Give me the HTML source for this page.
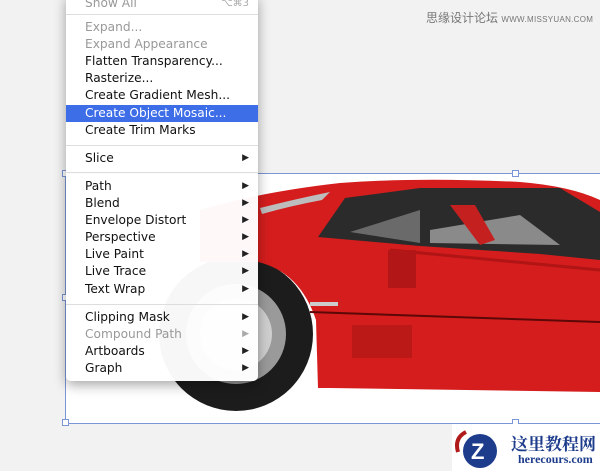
<!DOCTYPE html>
<html><head><meta charset="utf-8"><style>
body{margin:0;width:600px;height:471px;background:#f2f2f2;position:relative;overflow:hidden;font-family:"DejaVu Sans","Liberation Sans",sans-serif}
.menu{position:absolute;left:66px;top:-5px;width:192px;height:386px;background:rgba(255,255,255,0.97);border-radius:0 0 5px 5px;box-shadow:0 4px 12px rgba(0,0,0,.35)}
.it{position:absolute;left:19px;font-size:12.2px;color:#111;line-height:17px;height:17px;width:173px}
.it.d{color:#999}
.it .a{position:absolute;right:9px;top:0;font-size:9px;color:#222}
.it.d .a{color:#aaa}
.sel{background:#3d6ee8;color:#fff;left:0;padding-left:19px;width:173px}
.sep{position:absolute;left:0;width:192px;height:1px;background:#ddd}
</style></head><body>
<div style="position:absolute;left:426px;top:9px;font-size:12px;color:#777;font-family:'Liberation Sans','Noto Sans CJK SC',sans-serif">思缘设计论坛 <span style="font-size:8px;letter-spacing:.3px">WWW.MISSYUAN.COM</span></div>
<div style="position:absolute;left:65px;top:173px;width:540px;height:249px;background:#fff;border:1px solid #7b96d6"></div>
<div style="position:absolute;left:62px;top:170px;width:5px;height:5px;border:1px solid #7b96d6;background:#fff"></div>
<div style="position:absolute;left:62px;top:294px;width:5px;height:5px;border:1px solid #7b96d6;background:#fff"></div>
<div style="position:absolute;left:62px;top:419px;width:5px;height:5px;border:1px solid #7b96d6;background:#fff"></div>
<div style="position:absolute;left:512px;top:170px;width:5px;height:5px;border:1px solid #7b96d6;background:#fff"></div>
<div style="position:absolute;left:512px;top:419px;width:5px;height:5px;border:1px solid #7b96d6;background:#fff"></div>
<svg style="position:absolute;left:0;top:0" width="600" height="471">
<circle cx="236" cy="334" r="77" fill="#1c1c1c"/>
<circle cx="236" cy="334" r="50" fill="#9a9a9a"/>
<circle cx="236" cy="334" r="36" fill="#cfcfcf"/>
<path d="M200 210 Q260 192 340 183 Q420 177 520 182 Q570 186 600 200 L600 392 L330 388 L318 388 L316 320 Q300 272 258 262 L200 262 Z" fill="#d51d1d"/>
<path d="M260 208 Q300 198 330 192 L322 200 Q290 206 262 214 Z" fill="#bdbdbd"/>
<path d="M318 237 L345 198 L420 188 L560 188 L600 212 L600 260 L540 254 L420 246 Z" fill="#2b2b2b"/>
<path d="M350 232 L420 210 L420 243 Z" fill="#6a6a6a"/>
<path d="M430 230 L520 215 L560 245 L430 243 Z" fill="#8a8a8a"/>
<path d="M450 205 L475 205 L495 240 L480 245 Z" fill="#c42020"/>
<path d="M310 312 L600 322" stroke="#5c0808" stroke-width="2"/>
<path d="M390 250 L600 270" stroke="#b01414" stroke-width="3"/>
<rect x="388" y="250" width="28" height="38" fill="#b31616"/>
<rect x="352" y="325" width="60" height="33" fill="#bb1818"/>
<rect x="310" y="302" width="28" height="4" fill="#ccc"/>
</svg>
<div class="menu">
<div class="it d" style="top:0">Show All<span class="a" style="font-size:10px">⌥⌘3</span></div>
<div class="sep" style="top:19px"></div>
<div class="it d" style="top:24px">Expand...</div>
<div class="it d" style="top:41px">Expand Appearance</div>
<div class="it" style="top:58px">Flatten Transparency...</div>
<div class="it" style="top:75px">Rasterize...</div>
<div class="it" style="top:92px">Create Gradient Mesh...</div>
<div class="it sel" style="top:110px">Create Object Mosaic...</div>
<div class="it" style="top:127px">Create Trim Marks</div>
<div class="sep" style="top:150px"></div>
<div class="it" style="top:155px">Slice<span class="a">▶</span></div>
<div class="sep" style="top:177px"></div>
<div class="it" style="top:183px">Path<span class="a">▶</span></div>
<div class="it" style="top:200px">Blend<span class="a">▶</span></div>
<div class="it" style="top:217px">Envelope Distort<span class="a">▶</span></div>
<div class="it" style="top:234px">Perspective<span class="a">▶</span></div>
<div class="it" style="top:251px">Live Paint<span class="a">▶</span></div>
<div class="it" style="top:268px">Live Trace<span class="a">▶</span></div>
<div class="it" style="top:286px">Text Wrap<span class="a">▶</span></div>
<div class="sep" style="top:309px"></div>
<div class="it" style="top:314px">Clipping Mask<span class="a">▶</span></div>
<div class="it d" style="top:331px">Compound Path<span class="a">▶</span></div>
<div class="it" style="top:348px">Artboards<span class="a">▶</span></div>
<div class="it" style="top:365px">Graph<span class="a">▶</span></div>
</div>
<div style="position:absolute;left:452px;top:424px;width:148px;height:47px;background:#fff"></div>
<svg style="position:absolute;left:452px;top:426px" width="50" height="45">
<path d="M14 6 Q2 12 6 26" stroke="#b01a1a" stroke-width="4" fill="none"/>
<circle cx="28" cy="25" r="17" fill="#1d3c8c"/>
<text x="19" y="33" font-size="22" font-weight="bold" fill="#fff" font-family="Liberation Sans">Z</text>
</svg>
<div style="position:absolute;left:511px;top:430px;font-size:17px;font-weight:bold;color:#1d3c8c;font-family:'Liberation Serif','Noto Serif CJK SC',serif">这里教程网</div>
<div style="position:absolute;left:518px;top:452px;font-size:12px;font-weight:bold;color:#1d3c8c;font-family:'Liberation Serif',serif">herecours.com</div>
</body></html>
